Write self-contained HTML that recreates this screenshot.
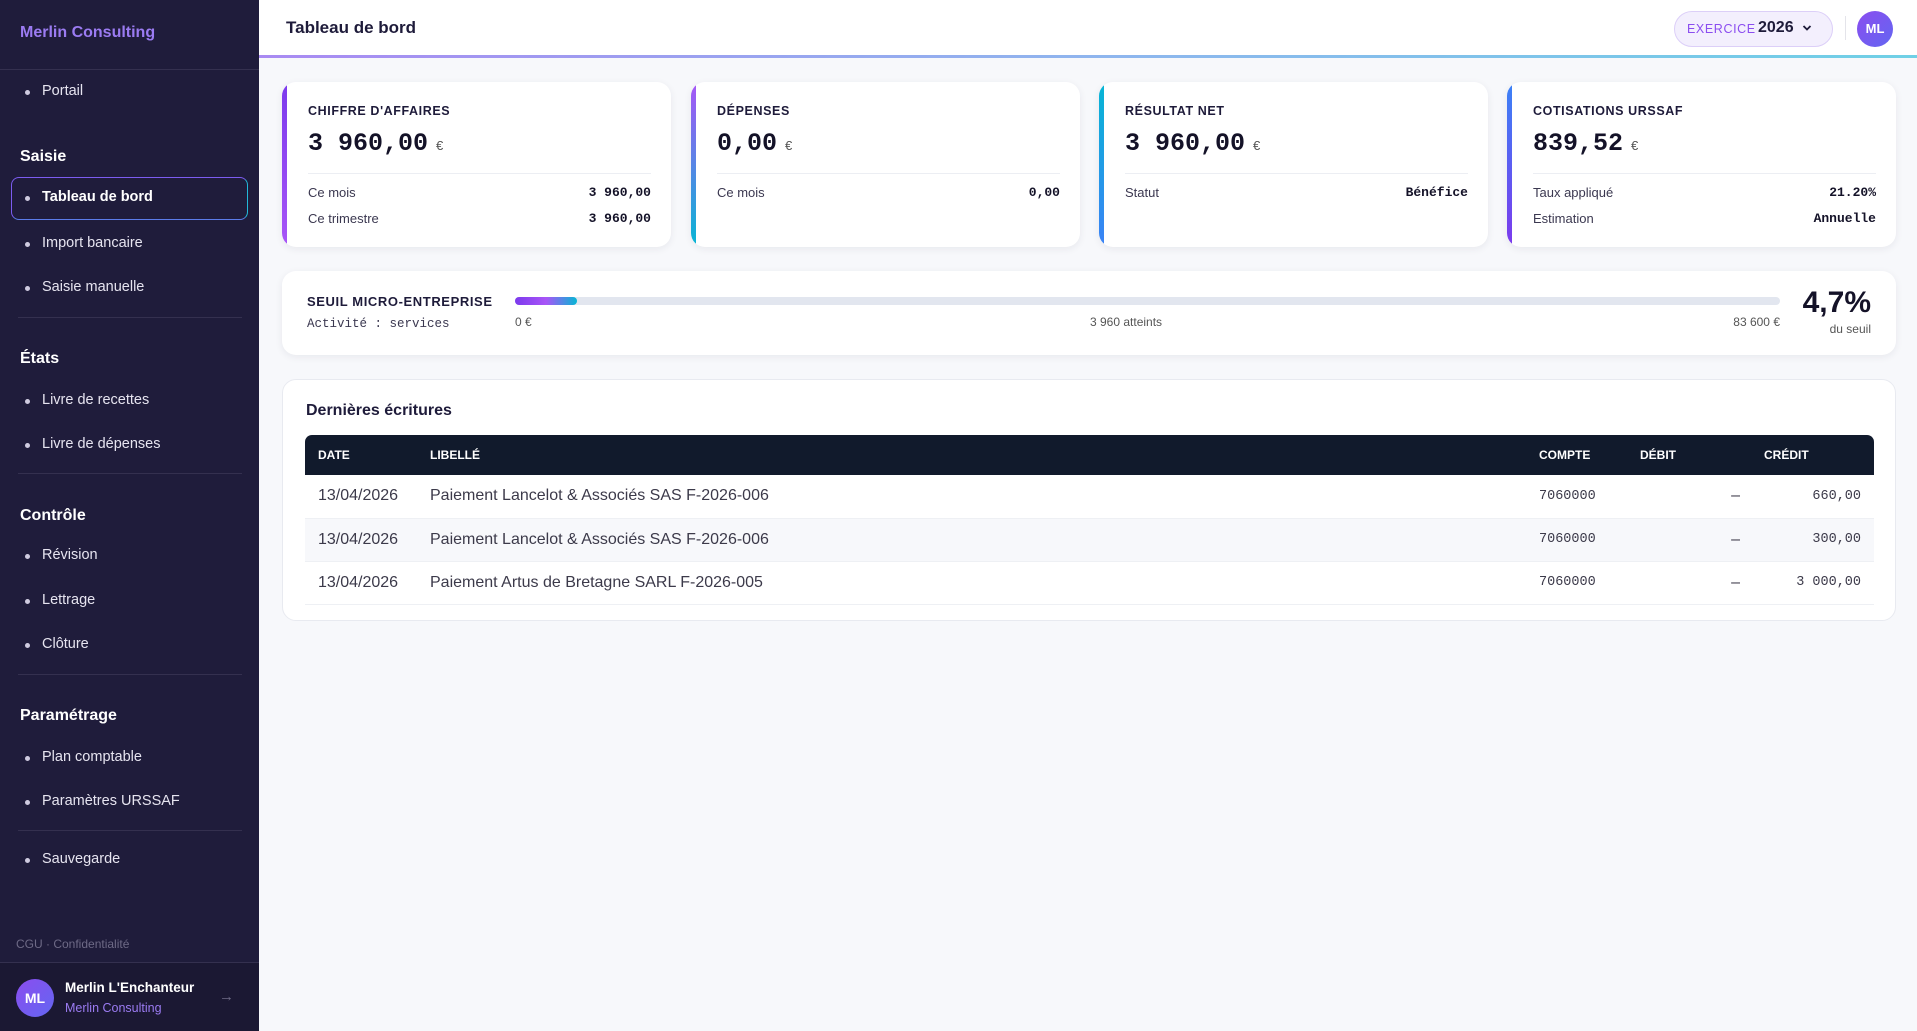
<!DOCTYPE html>
<html><head><meta charset="utf-8"><style>
*{box-sizing:border-box;margin:0;padding:0}
body{width:1917px;height:1031px;overflow:hidden;background:#f7f8fb;font-family:"Liberation Sans",sans-serif;position:relative;color:#1e1b3a}
.sb{position:absolute;left:0;top:0;width:259px;height:1031px;background:#1f1c3b}
.sb .brand{position:absolute;left:20px;top:24px;color:#9b7bf2;font-weight:bold;font-size:16px}
.hr{position:absolute;left:18px;width:224px;height:1px;background:#34304f}
.it{position:absolute;left:42px;color:#e6e4f0;font-size:14.5px}
.it:before{content:"";position:absolute;left:-17px;top:7px;width:5px;height:5px;border-radius:50%;background:#cfcbe0}
.sec{position:absolute;left:20px;color:#fff;font-weight:bold;font-size:16px}
.active{position:absolute;left:11px;top:177px;width:237px;height:43px;border-radius:8px;border:1.5px solid #7c5cf0;border-right-color:#22b8d8;border-bottom-color:#5b7be8}
.mono{font-family:"Liberation Mono",monospace}
.hd{position:absolute;left:259px;top:0;right:0;height:56px;background:#fff}
.hdline{position:absolute;left:259px;right:0;top:55px;height:3px;background:linear-gradient(90deg,#a98af2,#8fb5ee,#6fd0e6)}
.card{position:absolute;background:#fff;border-radius:14px;box-shadow:0 2px 8px rgba(30,27,58,.07);overflow:hidden}
.kc{top:82px;height:165px;width:389px}
.kc .bar{position:absolute;left:0;top:0;bottom:0;width:5px}
.kc .lb{position:absolute;left:26px;font-size:12.5px;font-weight:bold;letter-spacing:.6px;color:#1e1b3a}
.v{position:absolute;left:26px;top:47px;font-family:"Liberation Mono",monospace;font-weight:bold;font-size:25px;color:#141228}
.v small{font-family:"Liberation Sans";font-weight:normal;font-size:13px;color:#555;margin-left:8px}
.dv{position:absolute;left:26px;right:20px;top:91px;height:1px;background:#eceef3}
.r{position:absolute;left:26px;right:20px;font-size:13px;color:#3b3850;display:flex;justify-content:space-between}
.r b{font-family:"Liberation Mono",monospace;color:#141228;font-size:13px}
table{border-collapse:collapse;width:100%}
th{background:#111a2c;color:#fff;font-size:12px;text-align:left;height:40px;font-weight:bold}
td{height:43px;font-size:16px;color:#3c3a4a;border-bottom:1px solid #eef0f4;background:#fff}
tr.s td{background:#f7f8fb}
</style></head><body>
<div class="sb">
<div class="brand">Merlin Consulting</div>
<div class="hr" style="top:69px;left:0;width:259px"></div>
<div class="it" style="top:83px">Portail</div>
<div class="sec" style="top:148px">Saisie</div>
<div class="active"></div>
<div class="it" style="top:189px;color:#fff;font-weight:bold">Tableau de bord</div>
<div class="it" style="top:235px">Import bancaire</div>
<div class="it" style="top:279px">Saisie manuelle</div>
<div class="hr" style="top:317px"></div>
<div class="sec" style="top:350px">États</div>
<div class="it" style="top:392px">Livre de recettes</div>
<div class="it" style="top:436px">Livre de dépenses</div>
<div class="hr" style="top:473px"></div>
<div class="sec" style="top:507px">Contrôle</div>
<div class="it" style="top:547px">Révision</div>
<div class="it" style="top:592px">Lettrage</div>
<div class="it" style="top:636px">Clôture</div>
<div class="hr" style="top:674px"></div>
<div class="sec" style="top:707px">Paramétrage</div>
<div class="it" style="top:749px">Plan comptable</div>
<div class="it" style="top:793px">Paramètres URSSAF</div>
<div class="hr" style="top:830px"></div>
<div class="it" style="top:851px">Sauvegarde</div>
<div style="position:absolute;left:16px;top:937px;font-size:12px;color:#6e6a86">CGU · Confidentialité</div>
<div style="position:absolute;left:0;top:962px;width:259px;height:69px;background:#1b1833;border-top:1px solid #34304f"></div>
<div style="position:absolute;left:16px;top:979px;width:38px;height:38px;border-radius:50%;background:linear-gradient(135deg,#8b4df0,#6366f1);color:#fff;font-weight:bold;font-size:14px;text-align:center;line-height:38px">ML</div>
<div style="position:absolute;left:65px;top:980px;color:#fff;font-weight:bold;font-size:13.5px">Merlin L'Enchanteur</div>
<div style="position:absolute;left:65px;top:1001px;color:#9b7bf2;font-size:12.5px">Merlin Consulting</div>
<div style="position:absolute;left:219px;top:988px;color:#6e6a86;font-size:15px">→</div>
</div>
<div class="hd"></div><div class="hdline"></div>
<div style="position:absolute;left:286px;top:18px;font-size:17px;font-weight:bold;color:#1e1b3a">Tableau de bord</div>
<div style="position:absolute;left:1674px;top:11px;width:159px;height:36px;border-radius:18px;background:#f3effd;border:1px solid #dccff8"></div>
<div style="position:absolute;left:1687px;top:22px;font-size:12.5px;color:#8b4df0;letter-spacing:.6px">EXERCICE</div>
<div style="position:absolute;left:1758px;top:19px;font-size:16px;font-weight:bold;color:#1e1b3a">2026</div>
<svg style="position:absolute;left:1802px;top:24px" width="10" height="8" viewBox="0 0 10 8"><path d="M1.5 2 L5 5.5 L8.5 2" fill="none" stroke="#1e1b3a" stroke-width="1.8"/></svg>
<div style="position:absolute;left:1845px;top:16px;width:1px;height:24px;background:#e4e4ea"></div>
<div style="position:absolute;left:1857px;top:11px;width:36px;height:36px;border-radius:50%;background:linear-gradient(135deg,#8b4df0,#6366f1);color:#fff;font-weight:bold;font-size:13px;text-align:center;line-height:36px">ML</div>

<div class="card kc" style="left:282px"><div class="bar" style="background:linear-gradient(#7c3aed,#a855f7)"></div>
<div class="lb" style="top:22px">CHIFFRE D'AFFAIRES</div><div class="v">3 960,00<small>€</small></div><div class="dv"></div>
<div class="r" style="top:103px">Ce mois<b>3 960,00</b></div><div class="r" style="top:129px">Ce trimestre<b>3 960,00</b></div></div>
<div class="card kc" style="left:691px"><div class="bar" style="background:linear-gradient(#a855f7,#06b6d4)"></div>
<div class="lb" style="top:22px">DÉPENSES</div><div class="v">0,00<small>€</small></div><div class="dv"></div>
<div class="r" style="top:103px">Ce mois<b>0,00</b></div></div>
<div class="card kc" style="left:1099px"><div class="bar" style="background:linear-gradient(#06b6d4,#3b82f6)"></div>
<div class="lb" style="top:22px">RÉSULTAT NET</div><div class="v">3 960,00<small>€</small></div><div class="dv"></div>
<div class="r" style="top:103px">Statut<b>Bénéfice</b></div></div>
<div class="card kc" style="left:1507px"><div class="bar" style="background:linear-gradient(#3b82f6,#7c3aed)"></div>
<div class="lb" style="top:22px">COTISATIONS URSSAF</div><div class="v">839,52<small>€</small></div><div class="dv"></div>
<div class="r" style="top:103px">Taux appliqué<b>21.20%</b></div><div class="r" style="top:129px">Estimation<b>Annuelle</b></div></div>

<div class="card" style="left:282px;top:271px;width:1614px;height:84px">
<div style="position:absolute;left:25px;top:23px;font-size:13px;font-weight:bold;letter-spacing:.6px">SEUIL MICRO-ENTREPRISE</div>
<div class="mono" style="position:absolute;left:25px;top:46px;font-size:12.5px;color:#3b3850">Activité : services</div>
<div style="position:absolute;left:233px;top:26px;width:1265px;height:8px;border-radius:4px;background:#e2e6ef"></div>
<div style="position:absolute;left:233px;top:26px;width:62px;height:8px;border-radius:4px;background:linear-gradient(90deg,#7c3aed,#a855f7,#06b6d4)"></div>
<div style="position:absolute;left:233px;top:44px;font-size:12px;color:#555">0 €</div>
<div style="position:absolute;left:808px;top:44px;font-size:12px;color:#555">3 960 atteints</div>
<div style="position:absolute;right:116px;top:44px;font-size:12px;color:#555">83 600 €</div>
<div style="position:absolute;right:25px;top:15px;font-size:30px;font-weight:bold;color:#141228">4,7%</div>
<div style="position:absolute;right:25px;top:51px;font-size:12px;color:#555">du seuil</div>
</div>

<div class="card" style="left:282px;top:379px;width:1614px;height:242px;border:1px solid #e8eaf0;box-shadow:none">
<div style="position:absolute;left:23px;top:22px;font-size:16px;font-weight:bold">Dernières écritures</div>
<div style="position:absolute;left:22px;top:55px;width:1569px;border-radius:7px 7px 0 0;overflow:hidden">
<table>
<tr><th style="padding-left:13px;width:125px">DATE</th><th>LIBELLÉ</th><th style="width:101px">COMPTE</th><th style="width:124px">DÉBIT</th><th style="width:110px">CRÉDIT</th></tr>
<tr><td style="padding-left:13px">13/04/2026</td><td>Paiement Lancelot &amp; Associés SAS F-2026-006</td><td class="mono" style="font-size:13.5px">7060000</td><td style="text-align:right;padding-right:24px">–</td><td class="mono" style="text-align:right;padding-right:13px;font-size:13.5px">660,00</td></tr>
<tr class="s"><td style="padding-left:13px">13/04/2026</td><td>Paiement Lancelot &amp; Associés SAS F-2026-006</td><td class="mono" style="font-size:13.5px">7060000</td><td style="text-align:right;padding-right:24px">–</td><td class="mono" style="text-align:right;padding-right:13px;font-size:13.5px">300,00</td></tr>
<tr><td style="padding-left:13px">13/04/2026</td><td>Paiement Artus de Bretagne SARL F-2026-005</td><td class="mono" style="font-size:13.5px">7060000</td><td style="text-align:right;padding-right:24px">–</td><td class="mono" style="text-align:right;padding-right:13px;font-size:13.5px">3 000,00</td></tr>
</table></div></div>
</body></html>
